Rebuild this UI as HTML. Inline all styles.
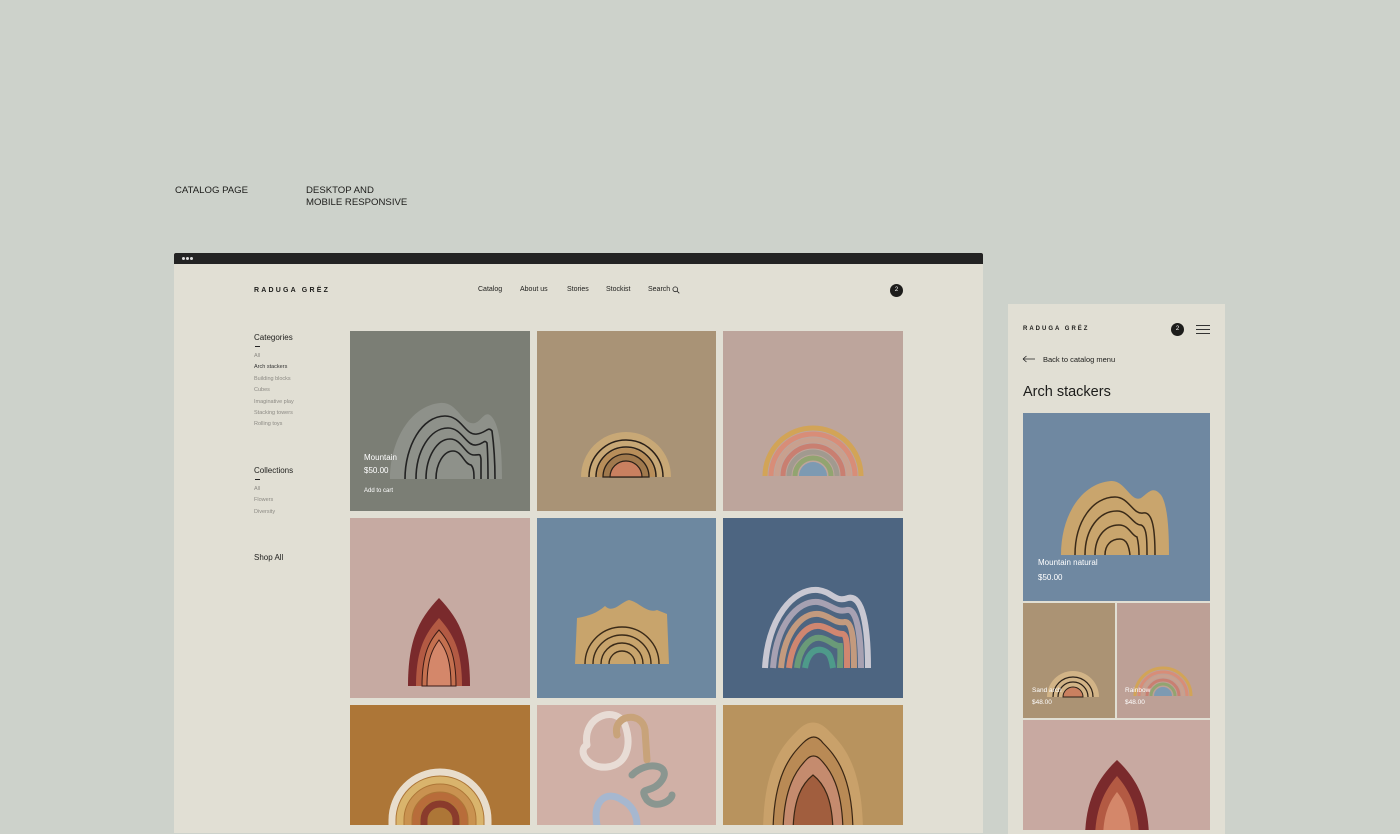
<!DOCTYPE html>
<html><head><meta charset="utf-8"><style>
*{margin:0;padding:0;box-sizing:border-box}
body{width:1400px;height:825px;overflow:hidden;background:#cdd2cb;font-family:"Liberation Sans",sans-serif;position:relative;color:#1d1d1b}
.a{position:absolute}
.lbl{font-size:9.6px;letter-spacing:0;line-height:12px}
.frame{left:174px;top:253px;width:809px;height:580px;background:#e1dfd4}
.bar{left:0;top:0;width:809px;height:11px;background:#232323;border-radius:2px 2px 0 0}
.dot{width:3px;height:3px;border-radius:50%;background:#ddd;top:4px}
.logo{font-weight:bold;font-size:7px;letter-spacing:2.2px}
.nav{font-size:7px;top:33px}
.cat{font-size:5.5px;color:#8c8a84;line-height:11.4px}
.h{font-size:8px}
.dash{width:5px;height:1px;background:#222}
.t{position:absolute;overflow:hidden}
.t svg{position:absolute;left:0;top:0}
.w{color:#fff;font-size:8px}
</style></head><body>
<div class="a lbl" style="left:175px;top:185px">CATALOG PAGE</div>
<div class="a lbl" style="left:306px;top:185px">DESKTOP AND<br>MOBILE RESPONSIVE</div>

<div class="a frame">
 <div class="a bar"></div>
 <div class="a dot" style="left:8px"></div><div class="a dot" style="left:12px"></div><div class="a dot" style="left:16px"></div>
 <div class="a logo" style="left:80px;top:34px">RADUGA GRËZ</div>
 <div class="a nav" style="left:304px;top:33px">Catalog</div>
 <div class="a nav" style="left:346px">About us</div>
 <div class="a nav" style="left:393px">Stories</div>
 <div class="a nav" style="left:432px">Stockist</div>
 <div class="a nav" style="left:474px">Search</div>
 <svg class="a" style="left:498px;top:33px" width="8" height="8"><circle cx="3.3" cy="3.3" r="2.4" fill="none" stroke="#222" stroke-width=".8"/><line x1="5" y1="5" x2="7.3" y2="7.3" stroke="#222" stroke-width=".8"/></svg>
 <div class="a" style="left:716px;top:31px;width:13px;height:13px;border-radius:50%;background:#1d1d1b;color:#fff;font-size:6px;text-align:center;line-height:13px">2</div>

 <div class="a h" style="left:80px;top:80px">Categories</div>
 <div class="a dash" style="left:81px;top:93px"></div>
 <div class="a cat" style="left:80px;top:98px">All<br><span style="color:#333">Arch stackers</span><br>Building blocks<br>Cubes<br>Imaginative play<br>Stacking towers<br>Rolling toys</div>
 <div class="a h" style="left:80px;top:213px">Collections</div>
 <div class="a dash" style="left:81px;top:226px"></div>
 <div class="a cat" style="left:80px;top:231px">All<br>Flowers<br>Diversity</div>
 <div class="a h" style="left:80px;top:300px">Shop All</div>
</div>

<div class="t" style="left:350px;top:331px;width:180px;height:180px;background:#7b7e75">
 <svg width="180" height="180"><g fill="none" stroke-linecap="butt">
 <path d="M40 148 C40 110 60 75 90 72 C108 70 112 95 125 92 C132 90 135 78 142 86 C150 96 152 120 152 148Z" fill="#8e918a"/>
 <path d="M55 148 C55 115 72 85 95 85 C112 85 115 105 127 103 C136 102 138 95 142 100 C144 115 145 130 145 148" stroke="#222" stroke-width="1.6"/>
 <path d="M66 148 C66 120 80 97 98 97 C112 97 116 115 126 114 C134 113 134 108 137 112 C138 125 138 135 138 148" stroke="#222" stroke-width="1.6"/>
 <path d="M76 148 C76 126 87 108 100 108 C112 108 115 124 124 124 C130 124 130 122 131 128 C131 138 131 143 131 148" stroke="#222" stroke-width="1.6"/>
 <path d="M86 148 C86 132 94 120 103 120 C112 120 114 133 121 134 C124 137 124 143 124 148" stroke="#222" stroke-width="1.6"/>
 </g></svg>
 <div class="a w" style="left:14px;top:122px">Mountain</div>
 <div class="a w" style="left:14px;top:135px">$50.00</div>
 <div class="a w" style="left:14px;top:157px;font-size:6px">Add to cart</div>
</div>
<div class="t" style="left:537px;top:331px;width:179px;height:180px;background:#a99376">
 <svg width="179" height="180"><g fill="none">
 <path d="M44 146 A45 45 0 0 1 134 146Z" fill="#c8a876"/>
 <path d="M52 146 A37 37 0 0 1 126 146" stroke="#2a2018" stroke-width="1.5"/>
 <path d="M59 146 A30 30 0 0 1 119 146" stroke="#2a2018" stroke-width="1.5"/>
 <path d="M60 146 A29 29 0 0 1 118 146Z" fill="#b88e5a"/>
 <path d="M66 146 A23 23 0 0 1 112 146Z" fill="#a0794d" stroke="#2a2018" stroke-width="1.3"/>
 <path d="M73 146 A16 16 0 0 1 105 146Z" fill="#c98060" stroke="#2a2018" stroke-width="1.2"/>
 </g></svg>
</div>
<div class="t" style="left:723px;top:331px;width:180px;height:180px;background:#bda59c">
 <svg width="180" height="180"><g fill="none">
 <path d="M42 145 A48 48 0 0 1 138 145" stroke="#d2a457" stroke-width="5"/>
 <path d="M48 145 A42 42 0 0 1 132 145" stroke="#d88d78" stroke-width="5"/>
 <path d="M54 145 A36 36 0 0 1 126 145" stroke="#c9a08e" stroke-width="5"/>
 <path d="M60 145 A30 30 0 0 1 120 145" stroke="#c97f71" stroke-width="5"/>
 <path d="M66 145 A24 24 0 0 1 114 145" stroke="#a19a8f" stroke-width="5"/>
 <path d="M72 145 A18 18 0 0 1 108 145" stroke="#92a470" stroke-width="5"/>
 <path d="M76 145 A14 14 0 0 1 104 145Z" fill="#7d9ab2"/>
 </g></svg>
</div>
<div class="t" style="left:350px;top:518px;width:180px;height:180px;background:#c6aaa2">
 <svg width="180" height="180">
 <path d="M58 178 C58 130 70 110 89 90 C108 110 120 130 120 178Z" fill="#7a2a2c" transform="translate(0,-10)"/>
 <path d="M66 168 C66 130 76 115 89 100 C102 115 112 130 112 168Z" fill="#b35a43"/>
 <path d="M72 168 C72 135 80 122 89 112 C98 122 106 135 106 168Z" fill="#c4704f" stroke="#3a1a15" stroke-width="1"/>
 <path d="M77 168 C77 140 83 130 89 122 C95 130 101 140 101 168Z" fill="#d4876a" stroke="#3a1a15" stroke-width="1"/>
 </svg>
</div>
<div class="t" style="left:537px;top:518px;width:179px;height:180px;background:#6d88a0">
 <svg width="179" height="180"><g fill="none">
 <path d="M38 146 L40 100 C52 98 60 95 68 88 C76 96 84 84 92 82 C102 84 110 96 120 92 L130 96 L132 146Z" fill="#c8a46c"/>
 <path d="M48 146 A37 37 0 0 1 122 146" stroke="#3a2a18" stroke-width="1.4"/>
 <path d="M56 146 A29 29 0 0 1 114 146" stroke="#3a2a18" stroke-width="1.4"/>
 <path d="M64 146 A21 21 0 0 1 106 146" stroke="#3a2a18" stroke-width="1.4"/>
 <path d="M72 146 A13 13 0 0 1 98 146" stroke="#3a2a18" stroke-width="1.4"/>
 </g></svg>
</div>
<div class="t" style="left:723px;top:518px;width:180px;height:180px;background:#4d6581">
 <svg width="180" height="180"><g fill="none" stroke-width="6">
 <path d="M42 150 C45 100 70 70 95 72 C110 74 112 85 125 80 C140 76 145 110 145 150" stroke="#c9c8d2"/>
 <path d="M50 150 C53 108 74 82 95 84 C108 86 112 95 124 92 C134 90 138 118 138 150" stroke="#a7a1b2"/>
 <path d="M58 150 C61 116 78 94 96 96 C108 98 112 106 122 104 C130 104 131 126 131 150" stroke="#c39a7e"/>
 <path d="M66 150 C69 124 82 106 97 108 C108 110 111 116 120 116 C125 118 124 134 124 150" stroke="#d08670"/>
 <path d="M74 150 C76 132 86 118 98 120 C108 122 110 128 117 128 C118 136 117 142 117 150" stroke="#6a9a78"/>
 <path d="M82 150 C84 138 90 130 99 132 C106 134 108 138 110 150" stroke="#4e9a8a"/>
 </g></svg>
</div>
<div class="t" style="left:350px;top:705px;width:180px;height:120px;background:#ad7637">
 <svg width="180" height="120"><g fill="none" stroke-width="7">
 <path d="M42 130 L42 115 A48 48 0 0 1 138 115 L138 130" stroke="#e8ddcc"/>
 <path d="M50 130 L50 115 A40 40 0 0 1 130 115 L130 130" stroke="#d9b46c"/>
 <path d="M58 130 L58 115 A32 32 0 0 1 122 115 L122 130" stroke="#c99250"/>
 <path d="M66 130 L66 115 A24 24 0 0 1 114 115 L114 130" stroke="#b86c3a"/>
 <path d="M74 130 L74 115 A16 16 0 0 1 106 115 L106 130" stroke="#8a3b2c"/>
 </g></svg>
</div>
<div class="t" style="left:537px;top:705px;width:179px;height:120px;background:#d0b0a6">
 <svg width="179" height="120"><g fill="none" stroke-width="7" stroke-linecap="round">
 <path d="M50 40 C45 10 80 0 88 20 C95 40 90 60 70 62 C50 64 40 45 50 40" stroke="#e8dcd5"/>
 <path d="M80 30 C75 10 105 5 108 25 L110 55" stroke="#c8a37a"/>
 <path d="M95 70 C110 55 135 60 125 75 C115 90 100 80 110 95 C120 105 135 95 135 90" stroke="#8a9690"/>
 <path d="M60 120 C55 95 70 85 85 95 C95 100 100 110 100 120" stroke="#a6b7cf"/>
 </g></svg>
</div>
<div class="t" style="left:723px;top:705px;width:180px;height:120px;background:#b8935e">
 <svg width="180" height="120">
 <path d="M40 130 C40 60 60 40 75 25 C85 15 95 15 105 25 C120 40 140 60 140 130Z" fill="#c9a16a"/>
 <path d="M50 130 C50 70 68 50 80 38 C88 30 94 30 100 38 C112 50 130 70 130 130Z" fill="#b98a55" stroke="#3a2614" stroke-width="1.2"/>
 <path d="M60 130 C60 82 74 64 84 54 C88 50 93 50 97 54 C107 64 120 82 120 130Z" fill="#c58b6e" stroke="#3a2614" stroke-width="1.2"/>
 <path d="M70 130 C70 92 80 78 90 70 C100 78 110 92 110 130Z" fill="#a15e3e" stroke="#3a2614" stroke-width="1.2"/>
 </svg>
</div>

<div class="a" style="left:1008px;top:304px;width:217px;height:530px;background:#e1dfd4">
 <div class="a logo" style="left:15px;top:22px;font-size:6px;letter-spacing:2px">RADUGA GRËZ</div>
 <div class="a" style="left:163px;top:19px;width:13px;height:13px;border-radius:50%;background:#1d1d1b;color:#fff;font-size:6px;text-align:center;line-height:13px">2</div>
 <div class="a" style="left:188px;top:21px;width:14px;height:1px;background:#333;box-shadow:0 4px 0 #333,0 8px 0 #333"></div>
 <svg class="a" style="left:14px;top:51px" width="14" height="8"><path d="M1 4H13M1 4L4.5 1M1 4L4.5 7" fill="none" stroke="#222" stroke-width=".8"/></svg>
 <div class="a" style="left:35px;top:51px;font-size:7.5px">Back to catalog menu</div>
 <div class="a" style="left:15px;top:80px;font-size:14.5px">Arch stackers</div>
</div>
<div class="t" style="left:1023px;top:413px;width:187px;height:188px;background:#6f88a1">
 <svg width="187" height="188"><g fill="none">
 <path d="M38 142 C38 100 60 70 88 68 C102 67 108 90 118 85 C125 80 130 72 138 82 C145 92 146 120 146 142Z" fill="#c9a56d"/>
 <path d="M52 142 C52 108 70 84 92 84 C106 84 110 102 120 100 C130 98 132 118 132 142" stroke="#3a2a18" stroke-width="1.5"/>
 <path d="M62 142 C62 116 76 98 94 98 C106 98 110 112 118 112 C124 114 124 128 124 142" stroke="#3a2a18" stroke-width="1.5"/>
 <path d="M72 142 C72 124 82 112 96 112 C106 112 108 122 114 124 C116 132 116 138 116 142" stroke="#3a2a18" stroke-width="1.5"/>
 <path d="M82 142 C82 132 88 126 97 126 C104 126 106 134 107 142" stroke="#3a2a18" stroke-width="1.5"/>
 </g></svg>
 <div class="a w" style="left:15px;top:145px">Mountain natural</div>
 <div class="a w" style="left:15px;top:160px">$50.00</div>
</div>
<div class="t" style="left:1023px;top:603px;width:92px;height:115px;background:#ab9374">
 <svg width="92" height="115"><g fill="none">
 <path d="M24 94 A26 26 0 0 1 76 94Z" fill="#d2b487"/>
 <path d="M30 94 A20 20 0 0 1 70 94" stroke="#2a2018" stroke-width="1.2"/>
 <path d="M35 94 A15 15 0 0 1 65 94" stroke="#2a2018" stroke-width="1.2"/>
 <path d="M40 94 A10 10 0 0 1 60 94Z" fill="#c98060" stroke="#2a2018" stroke-width="1"/>
 </g></svg>
 <div class="a w" style="left:9px;top:84px;font-size:6.5px">Sand arch</div>
 <div class="a w" style="left:9px;top:96px;font-size:6.5px">$48.00</div>
</div>
<div class="t" style="left:1117px;top:603px;width:93px;height:115px;background:#bda096">
 <svg width="93" height="115"><g fill="none" stroke-width="3">
 <path d="M18 93 A28 28 0 0 1 74 93" stroke="#d2a457"/>
 <path d="M22 93 A24 24 0 0 1 70 93" stroke="#d88d78"/>
 <path d="M26 93 A20 20 0 0 1 66 93" stroke="#c9a08e"/>
 <path d="M30 93 A16 16 0 0 1 62 93" stroke="#c97f71"/>
 <path d="M34 93 A12 12 0 0 1 58 93" stroke="#92a470"/>
 <path d="M37 93 A9 9 0 0 1 55 93Z" fill="#7d9ab2" stroke="none"/>
 </g></svg>
 <div class="a w" style="left:8px;top:84px;font-size:6.5px">Rainbow</div>
 <div class="a w" style="left:8px;top:96px;font-size:6.5px">$48.00</div>
</div>
<div class="t" style="left:1023px;top:720px;width:187px;height:110px;background:#c8a9a1">
 <svg width="187" height="110">
 <path d="M62 120 C62 80 75 58 94 40 C113 58 126 80 126 120Z" fill="#7a2a2c"/>
 <path d="M72 120 C72 88 82 70 94 56 C106 70 116 88 116 120Z" fill="#b35a43"/>
 <path d="M80 120 C80 95 86 82 94 72 C102 82 108 95 108 120Z" fill="#d4876a"/>
 </svg>
</div>
</body></html>
